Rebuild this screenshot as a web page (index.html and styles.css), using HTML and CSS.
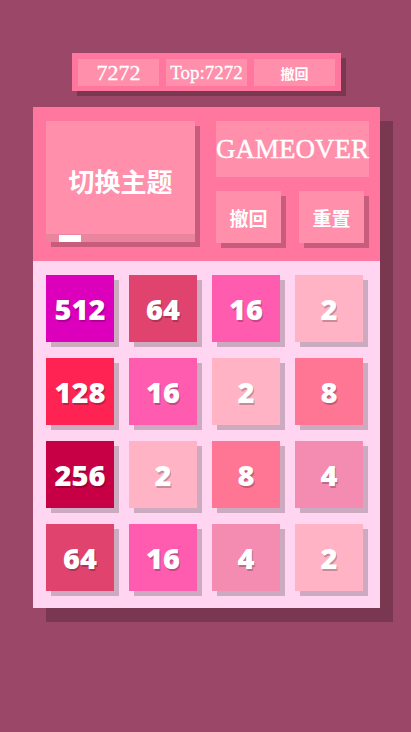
FILE: index.html
```html
<!DOCTYPE html>
<html lang="zh">
<head>
<meta charset="utf-8">
<title>2048</title>
<link rel="stylesheet" href="styles.css">
</head>
<body>
<div class="topbar">
  <div class="cell score">7272</div>
  <div class="cell top">Top:7272</div>
  <div class="cell undo-small">撤回</div>
</div>
<div class="panel">
  <div class="head">
    <div class="big">
      <div class="big-label">切换主题</div>
      <div class="strip"><div class="strip-bar"></div></div>
    </div>
    <div class="side">
      <div class="gameover">GAMEOVER</div>
      <div class="btns">
        <div class="btn">撤回</div>
        <div class="btn">重置</div>
      </div>
    </div>
  </div>
  <div class="grid">
    <div class="tile t512">512</div>
    <div class="tile t64">64</div>
    <div class="tile t16">16</div>
    <div class="tile t2">2</div>
    <div class="tile t128">128</div>
    <div class="tile t16">16</div>
    <div class="tile t2">2</div>
    <div class="tile t8">8</div>
    <div class="tile t256">256</div>
    <div class="tile t2">2</div>
    <div class="tile t8">8</div>
    <div class="tile t4">4</div>
    <div class="tile t64">64</div>
    <div class="tile t16">16</div>
    <div class="tile t4">4</div>
    <div class="tile t2">2</div>
  </div>
</div>
</body>
</html>
```

FILE: styles.css
```css
html, body {
  margin: 0;
  padding: 0;
}
body {
  background: #9b4767;
  min-height: 732px;
  font-family: "Noto Sans CJK SC", "Noto Sans", sans-serif;
  color: #fff;
  overflow: hidden;
}
.topbar {
  margin: 53px 0 0 72px;
  width: 269px;
  height: 38px;
  box-sizing: border-box;
  padding: 6px 6px 5px 6px;
  display: flex;
  gap: 7px;
  background: #ff779f;
  box-shadow: 5px 5px 0 rgba(0, 0, 0, 0.22);
}
.cell {
  flex: 0 0 81px;
  background: #ff8faa;
  display: flex;
  align-items: center;
  justify-content: center;
  white-space: nowrap;
}
.score {
  font-family: "Liberation Serif", serif;
  font-size: 22px;
  -webkit-text-stroke: 0.3px #fff;
}
.top {
  font-family: "Liberation Serif", serif;
  font-size: 19px;
  -webkit-text-stroke: 0.3px #fff;
}
.undo-small {
  font-size: 14px;
  font-weight: 700;
}
.panel {
  margin: 16px 0 0 33px;
  width: 347px;
  box-shadow: 13px 14px 0 rgba(0, 0, 0, 0.22);
}
.head {
  height: 154px;
  box-sizing: border-box;
  padding: 14px 11px 0 13px;
  display: flex;
  gap: 21px;
  background: #ff779f;
}
.big {
  width: 149px;
  height: 121px;
  background: #ff8faa;
  box-shadow: 5px 5px 0 rgba(0, 0, 0, 0.22);
  display: flex;
  flex-direction: column;
}
.big-label {
  flex: 1;
  display: flex;
  align-items: center;
  justify-content: center;
  font-size: 26px;
  font-weight: 700;
  padding-top: 6px;
}
.strip {
  height: 8px;
  background: #e9869e;
  display: flex;
  align-items: flex-end;
  padding-left: 13px;
}
.strip-bar {
  width: 22px;
  height: 7px;
  background: #fff;
}
.side {
  width: 153px;
  display: flex;
  flex-direction: column;
}
.gameover {
  height: 56px;
  background: #ff8faa;
  display: flex;
  align-items: center;
  justify-content: center;
  font-family: "Liberation Serif", serif;
  font-size: 27px;
  -webkit-text-stroke: 0.4px #fff;
  white-space: nowrap;
}
.btns {
  margin-top: 14px;
  display: flex;
  gap: 18px;
}
.btn {
  width: 65px;
  height: 52px;
  background: #ff8faa;
  box-shadow: 5px 5px 0 rgba(0, 0, 0, 0.22);
  display: flex;
  align-items: center;
  justify-content: center;
  font-size: 19px;
  font-weight: 700;
}
.grid {
  background: #ffd5f1;
  padding: 14px 17px 17px 13px;
  display: grid;
  grid-template-columns: repeat(4, 68px);
  grid-auto-rows: 67px;
  column-gap: 15px;
  row-gap: 16px;
}
.tile {
  display: flex;
  align-items: center;
  justify-content: center;
  font-family: "Open Sans", "Noto Sans", sans-serif;
  font-weight: 800;
  font-size: 29px;
  box-shadow: 5px 5px 0 rgba(0, 0, 0, 0.2);
  text-shadow: 1px 2px 0 rgba(0, 0, 0, 0.22);
}
.t2 { background: #ffb3c5; }
.t4 { background: #f48bb0; }
.t8 { background: #ff7594; }
.t16 { background: #ff5cb0; }
.t64 { background: #e0446e; }
.t128 { background: #ff2353; }
.t256 { background: #c70045; }
.t512 { background: #dc00bc; }
```
